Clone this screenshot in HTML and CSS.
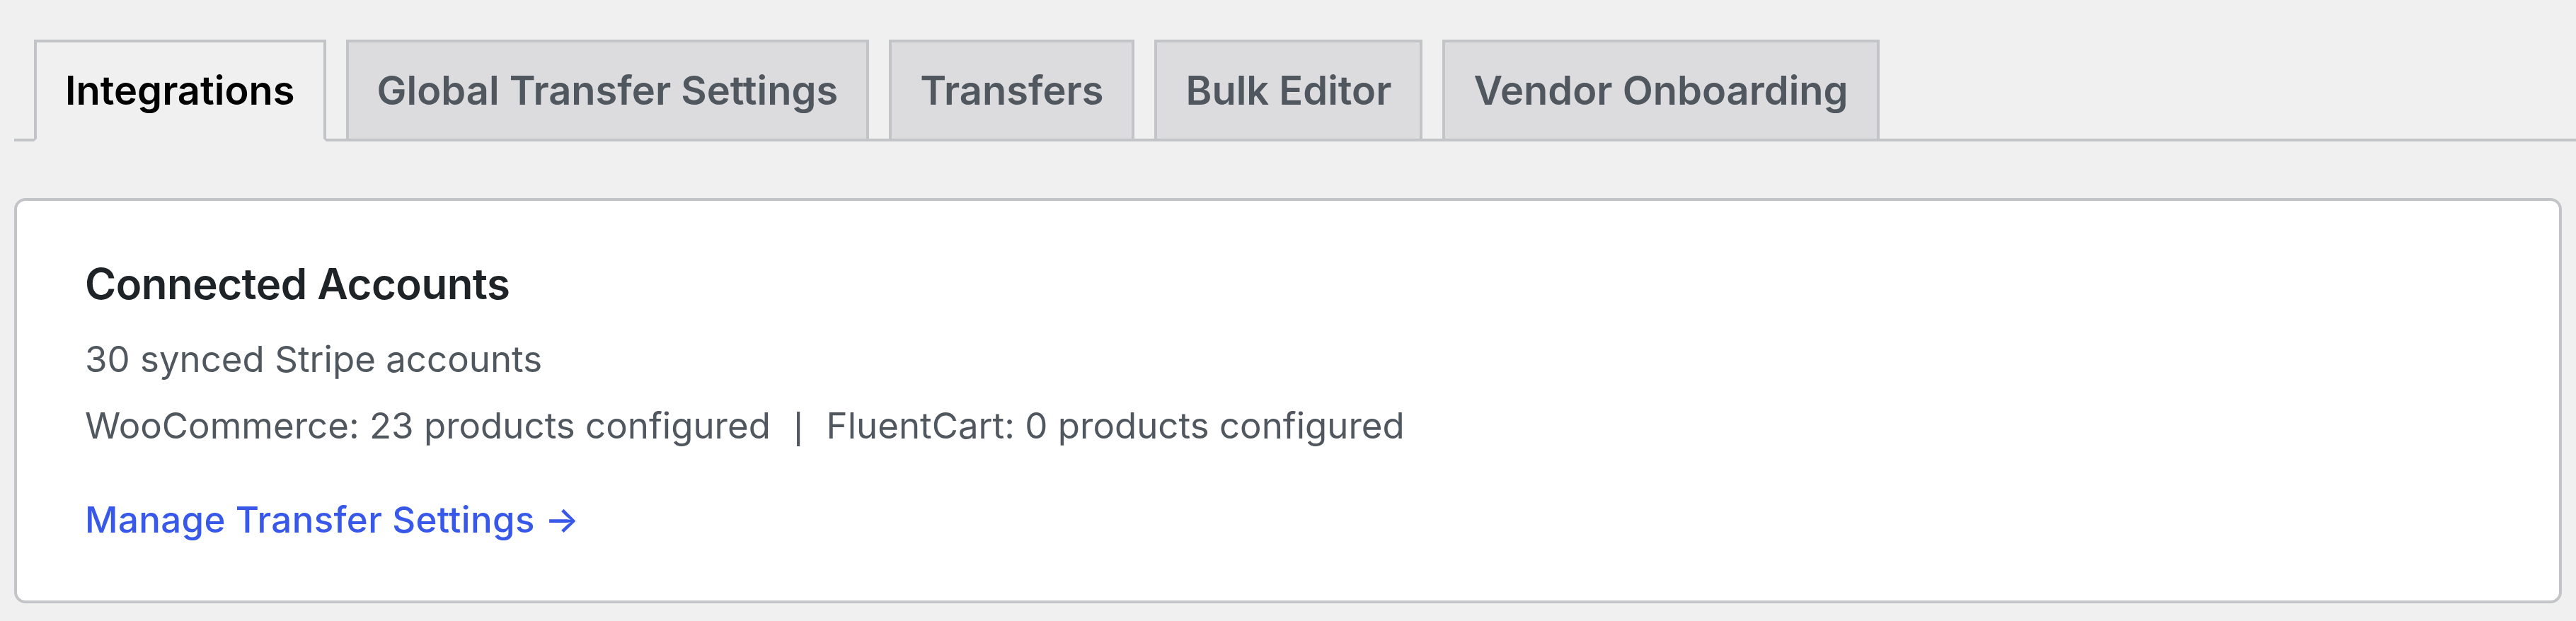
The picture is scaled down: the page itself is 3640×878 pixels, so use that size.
FILE: index.html
```html
<!DOCTYPE html>
<html lang="en">
<head>
<meta charset="utf-8">
<title>Integrations</title>
<link rel="stylesheet" href="styles.css">
</head>
<body>
<div class="wrap">
  <nav class="nav-tab-wrapper">
    <a class="nav-tab nav-tab-active" href="#">Integrations</a>
    <a class="nav-tab" href="#">Global Transfer Settings</a>
    <a class="nav-tab" href="#">Transfers</a>
    <a class="nav-tab" href="#">Bulk Editor</a>
    <a class="nav-tab" href="#">Vendor Onboarding</a>
  </nav>
  <div class="card">
    <h2 class="card-title">Connected Accounts</h2>
    <p class="stat">30 synced Stripe accounts</p>
    <p class="stat">WooCommerce: 23 products configured &nbsp;<span class="sep">|</span>&nbsp; FluentCart: 0 products configured</p>
    <p class="card-link"><a href="#">Manage Transfer Settings →</a></p>
  </div>
</div>
</body>
</html>
```

FILE: styles.css
```css
body {
  margin: 0;
  background: #f0f0f1;
  font-family: Inter, "Liberation Sans", sans-serif;
}
.wrap {
  padding-top: 56px;
}
.nav-tab-wrapper {
  display: flex;
  align-items: flex-end;
  margin-left: 20px;
  border-bottom: 4px solid #c3c4c7;
}
.nav-tab {
  margin-left: 28px;
  padding: 20px 40px;
  border: 4px solid #c3c4c7;
  border-bottom: none;
  background: #dcdcde;
  color: #50575e;
  font-size: 56px;
  font-weight: 600;
  line-height: 96px;
  text-decoration: none;
  white-space: nowrap;
}
.nav-tab-active {
  background: #f0f0f1;
  color: #000;
  border-bottom: 4px solid #f0f0f1;
  margin-bottom: -4px;
}
.card {
  margin: 80px 20px 0;
  padding: 77px 96px 75px;
  background: #fff;
  border: 4px solid #c3c4c7;
  border-radius: 16px;
}
.card-title {
  margin: 0 0 28px;
  font-size: 60px;
  line-height: 80px;
  font-weight: 600;
  letter-spacing: -0.5px;
  color: #1d2327;
}
.stat {
  margin: 0 0 16px;
  font-size: 51px;
  line-height: 78px;
  color: #50575e;
}
.sep {
  margin: 0 4px;
  font-family: "Liberation Sans", sans-serif;
}
.card-link {
  margin: 54px 0 0;
  font-size: 51px;
  line-height: 78px;
}
.card-link a {
  color: #3858e9;
  font-weight: 500;
  letter-spacing: 0.35px;
  text-decoration: none;
}
```
